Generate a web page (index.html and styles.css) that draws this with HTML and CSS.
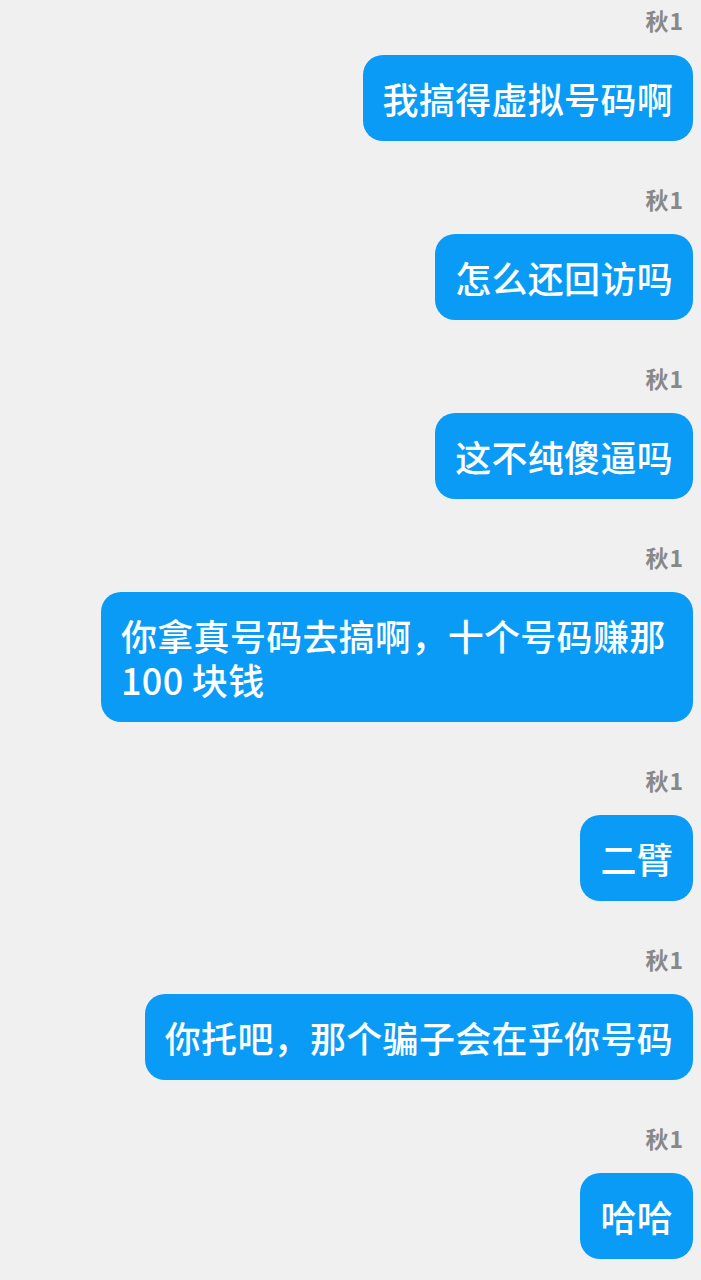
FILE: index.html
```html
<html>
<head>
	<meta charset="utf-8">
	<title>聊天</title>
	<link rel="stylesheet" href="styles.css">
</head>
<body>
	<section class="chat">
		<div class="msg">
			<div class="name">秋1</div>
			<div class="bubble">我搞得虚拟号码啊</div>
		</div>
		<div class="msg">
			<div class="name">秋1</div>
			<div class="bubble">怎么还回访吗</div>
		</div>
		<div class="msg">
			<div class="name">秋1</div>
			<div class="bubble">这不纯傻逼吗</div>
		</div>
		<div class="msg">
			<div class="name">秋1</div>
			<div class="bubble">你拿真号码去搞啊，十个号码赚那 100 块钱</div>
		</div>
		<div class="msg">
			<div class="name">秋1</div>
			<div class="bubble">二臂</div>
		</div>
		<div class="msg">
			<div class="name">秋1</div>
			<div class="bubble">你托吧，那个骗子会在乎你号码</div>
		</div>
		<div class="msg">
			<div class="name">秋1</div>
			<div class="bubble">哈哈</div>
		</div>
	</section>
</body>
</html>
```

FILE: styles.css
```css
		html, body {
			margin: 0;
			background-color: #f0f0f0;
		}
		body {
			font-family: "Noto Sans CJK SC", "Noto Sans", sans-serif;
		}
		.chat {
			display: flex;
			flex-direction: column;
			padding: 5px 8px 0 8px;
			gap: 43px;
		}
		.msg {
			display: flex;
			flex-direction: column;
			align-items: flex-end;
		}
		.name {
			font-size: 23px;
			line-height: 30px;
			font-weight: 700;
			letter-spacing: 1px;
			color: #888888;
			margin-right: 9px;
			margin-bottom: 20px;
		}
		.bubble {
			box-sizing: border-box;
			max-width: 592px;
			padding: 21px 20px;
			font-size: 36px;
			line-height: 44px;
			font-weight: 500;
			letter-spacing: 0.3px;
			color: #ffffff;
			background-color: #0a9bf6;
			border-radius: 20px;
		}
```
